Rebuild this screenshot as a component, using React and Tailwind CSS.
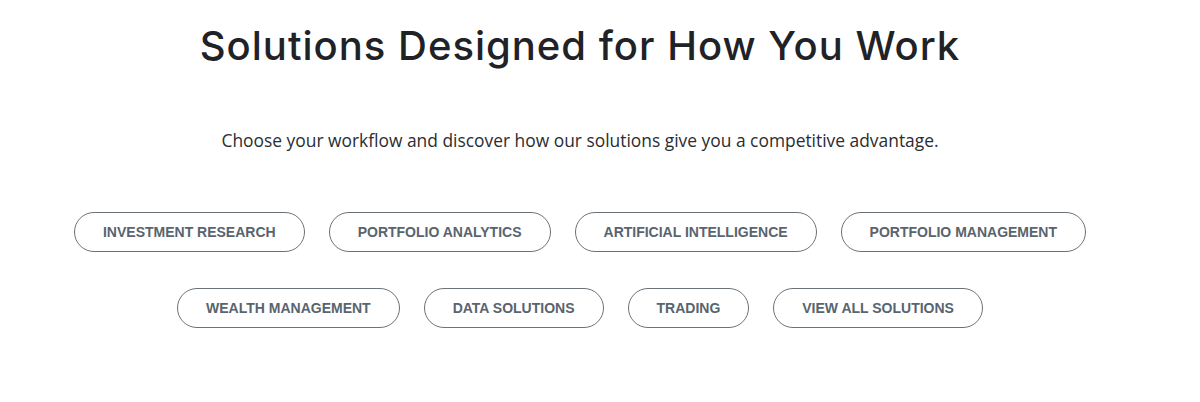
const SOLUTIONS = [
  ['Investment Research', 'Portfolio Analytics', 'Artificial Intelligence', 'Portfolio Management'],
  ['Wealth Management', 'Data Solutions', 'Trading', 'View All Solutions'],
]

export default function App() {
  return (
    <div className="w-[1160px] bg-white pt-[21px] text-center font-['Open_Sans',sans-serif]">
      <h1 className="font-['Inter',sans-serif] text-[40px] leading-[50px] font-medium text-[#1f2226] tracking-[1px]">
        Solutions Designed for How You Work
      </h1>
      <p className="mt-[57px] text-[17.4px] leading-[24px] text-[#2a2d31]">
        Choose your workflow and discover how our solutions give you a competitive advantage.
      </p>
      <div className="mt-[60px] flex flex-col items-center gap-[36px]">
        {SOLUTIONS.map((row, i) => (
          <div key={i} className="flex justify-center gap-[24px]">
            {row.map((label) => (
              <button
                key={label}
                className="h-[40px] rounded-full border border-[#6b7379] px-[28px] font-['Liberation_Sans',sans-serif] text-[14px] font-bold uppercase text-[#58646e]"
              >
                {label}
              </button>
            ))}
          </div>
        ))}
      </div>
    </div>
  )
}
